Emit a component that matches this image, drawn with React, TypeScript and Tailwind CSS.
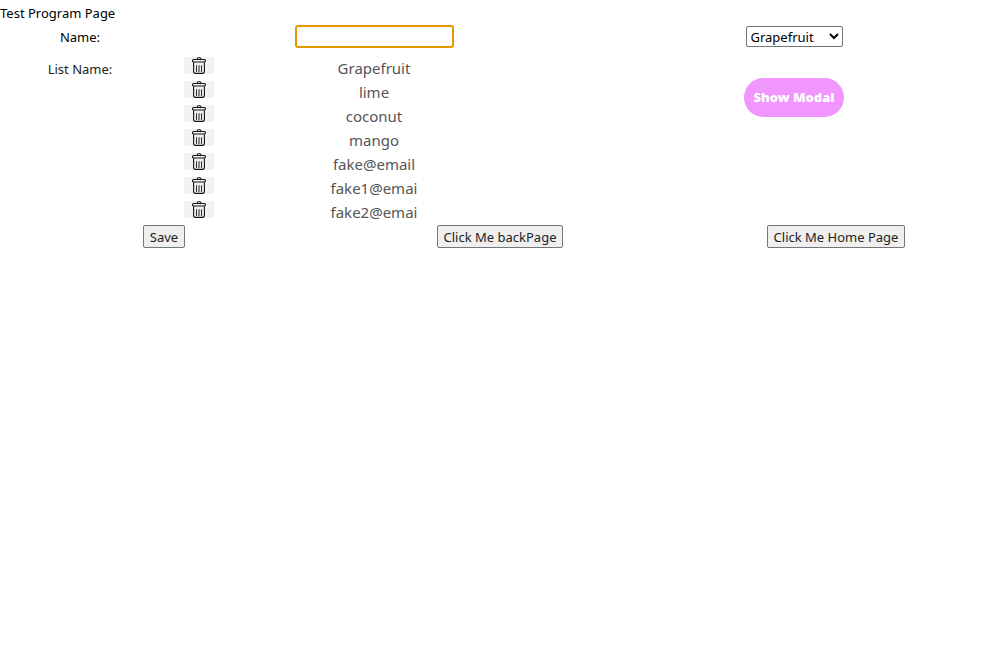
import React from "react";

const names = ["Grapefruit", "lime", "coconut", "mango", "fake@email", "fake1@emai", "fake2@emai"];

function TrashIcon() {
  return (
    <svg width="16" height="17" viewBox="0 0 16 17" fill="none" stroke="#111" strokeWidth="1.1" aria-hidden="true">
      <path d="M6.2 2.5V1.8Q6.2 .7 7.1 .7H8.9Q9.8 .7 9.8 1.8V2.5" />
      <rect x="1.5" y="2.5" width="13" height="2.5" rx="1.2" />
      <path d="M2.6 5.2V14.9Q2.8 16.4 4.4 16.4H11.6Q13.2 16.4 13.4 14.9V5.2" />
      <path d="M5.5 8.2V14.9M8 8.2V14.9M10.5 8.2V14.9" stroke="#333" />
    </svg>
  );
}

function PlainButton({ children }: { children: React.ReactNode }) {
  return (
    <button
      type="button"
      className="h-[23px] rounded-[2px] border border-[#767676] bg-[#efefef] px-[6px] text-[13px] leading-5 whitespace-nowrap text-[#222]"
    >
      {children}
    </button>
  );
}

export default function App() {
  return (
    <main className="bg-white font-['Noto_Sans',sans-serif] text-[13px] text-black">
      <h1 className="h-[25px] leading-[26px]">Test Program Page</h1>

      <form onSubmit={(e) => e.preventDefault()}>
        <div className="grid grid-cols-[40fr_107fr_103fr] items-center justify-items-center">
          <label htmlFor="name" className="self-end leading-[22px]">
            Name:
          </label>
          <input
            id="name"
            type="text"
            className="h-[23px] w-[159px] rounded-[3px] border-2 border-[#e59700] bg-white px-1 outline-none"
          />
          <select
            aria-label="Fruit"
            defaultValue="Grapefruit"
            className="h-[21px] w-[97px] rounded-[2px] border border-[#767676] bg-white text-[13px]"
          >
            <option>Grapefruit</option>
            <option>lime</option>
            <option>coconut</option>
            <option>mango</option>
          </select>
        </div>

        <div className="mt-2 grid grid-cols-[40fr_107fr_103fr]">
          <div className="text-center leading-[26px] text-[#222]">List Name:</div>
          <ul>
            {names.map((name) => (
              <li key={name} className="grid h-6 grid-cols-[39fr_136fr_39fr] justify-items-center">
                <button
                  type="button"
                  aria-label={`Delete ${name}`}
                  className="mt-px flex h-[17px] w-[30px] items-center justify-center bg-[#f2f2f2]"
                >
                  <TrashIcon />
                </button>
                <span className="text-[15px] leading-6 text-[#555]">{name}</span>
              </li>
            ))}
          </ul>
          <div className="pt-[22px] text-center">
            <button
              type="button"
              className="h-[39px] rounded-full bg-[#f195ff] px-[10px] text-[13px] font-black whitespace-nowrap text-white"
            >
              Show Modal
            </button>
          </div>
        </div>

        <div className="mt-px grid grid-cols-[41fr_43fr_41fr] justify-items-center">
          <PlainButton>Save</PlainButton>
          <PlainButton>Click Me backPage</PlainButton>
          <PlainButton>Click Me Home Page</PlainButton>
        </div>
      </form>
    </main>
  );
}
